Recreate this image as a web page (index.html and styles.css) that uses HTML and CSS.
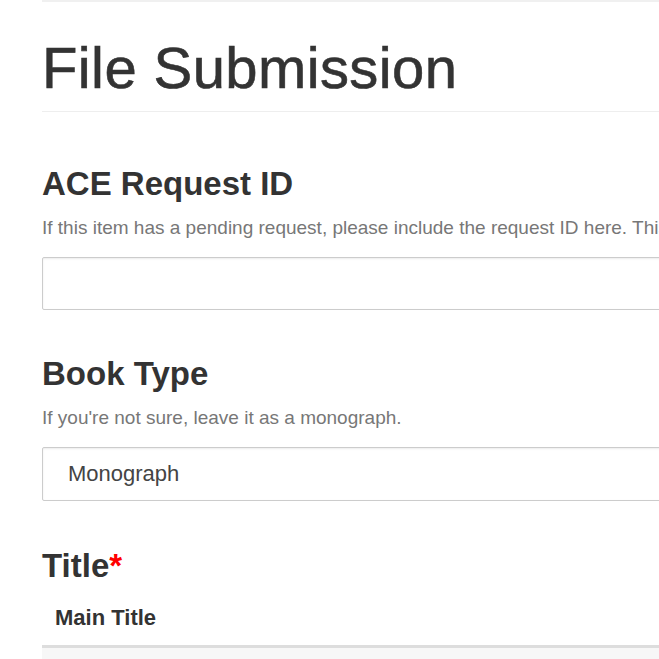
FILE: index.html
```html
<!DOCTYPE html>
<html>
<head>
<meta charset="utf-8">
<link rel="stylesheet" href="styles.css">
</head>
<body>
<div class="page">
  <div class="topbar"></div>
  <h1 class="page-title">File Submission</h1>
  <div class="field field-first">
    <h2 class="field-label">ACE Request ID</h2>
    <p class="help">If this item has a pending request, please include the request ID here. This will help us match the submission to the request.</p>
    <input class="text-input" type="text">
  </div>
  <div class="field field-second">
    <h2 class="field-label">Book Type</h2>
    <p class="help">If you're not sure, leave it as a monograph.</p>
    <div class="select-box">Monograph</div>
  </div>
  <div class="field field-third">
    <h2 class="field-label">Title<span class="req">*</span></h2>
    <h3 class="sub-label">Main Title</h3>
    <div class="group-panel"></div>
  </div>
</div>
</body>
</html>
```

FILE: styles.css
```css
html, body {
  margin: 0;
  padding: 0;
  overflow: hidden;
  background: #fff;
}
body {
  font-family: "Liberation Sans", Arial, Helvetica, sans-serif;
  color: #333;
}
.page {
  margin-left: 42px;
  width: 900px;
}
.topbar {
  height: 2px;
  background: #f0f0f0;
}
.page-title {
  font-size: 58px;
  font-weight: normal;
  line-height: 1;
  margin: 37px 0 0;
  padding-bottom: 14px;
  border-bottom: 1px solid #eee;
  letter-spacing: 0.4px;
  -webkit-text-stroke: 0.6px #333;
}
.field-label {
  font-size: 33px;
  font-weight: bold;
  line-height: 1;
  margin: 0;
}
.field-first .field-label {
  margin-top: 55px;
}
.field-second .field-label {
  margin-top: 47px;
}
.field-third .field-label {
  margin-top: 48px;
}
.help {
  font-size: 19px;
  color: #777;
  margin: 18px 0 0;
  line-height: 1;
  white-space: nowrap;
}
.text-input {
  display: block;
  box-sizing: border-box;
  width: 100%;
  height: 53px;
  margin: 20px 0 0;
  border: 1px solid #ccc;
  border-radius: 2px;
  box-shadow: inset 0 1px 2px rgba(0,0,0,0.08);
  background: #fff;
}
.select-box {
  box-sizing: border-box;
  height: 54px;
  margin-top: 20px;
  border: 1px solid #ccc;
  border-radius: 2px;
  box-shadow: inset 0 1px 2px rgba(0,0,0,0.08);
  padding: 13px 25px;
  font-size: 22px;
  line-height: 26px;
  color: #444;
}
.req {
  color: #f00;
}
.sub-label {
  font-size: 22px;
  font-weight: bold;
  margin: 25px 0 0 13px;
  line-height: 1;
}
.group-panel {
  margin-top: 16px;
  height: 40px;
  border-top: 3px solid #ddd;
  background: #f7f7f7;
}
```
